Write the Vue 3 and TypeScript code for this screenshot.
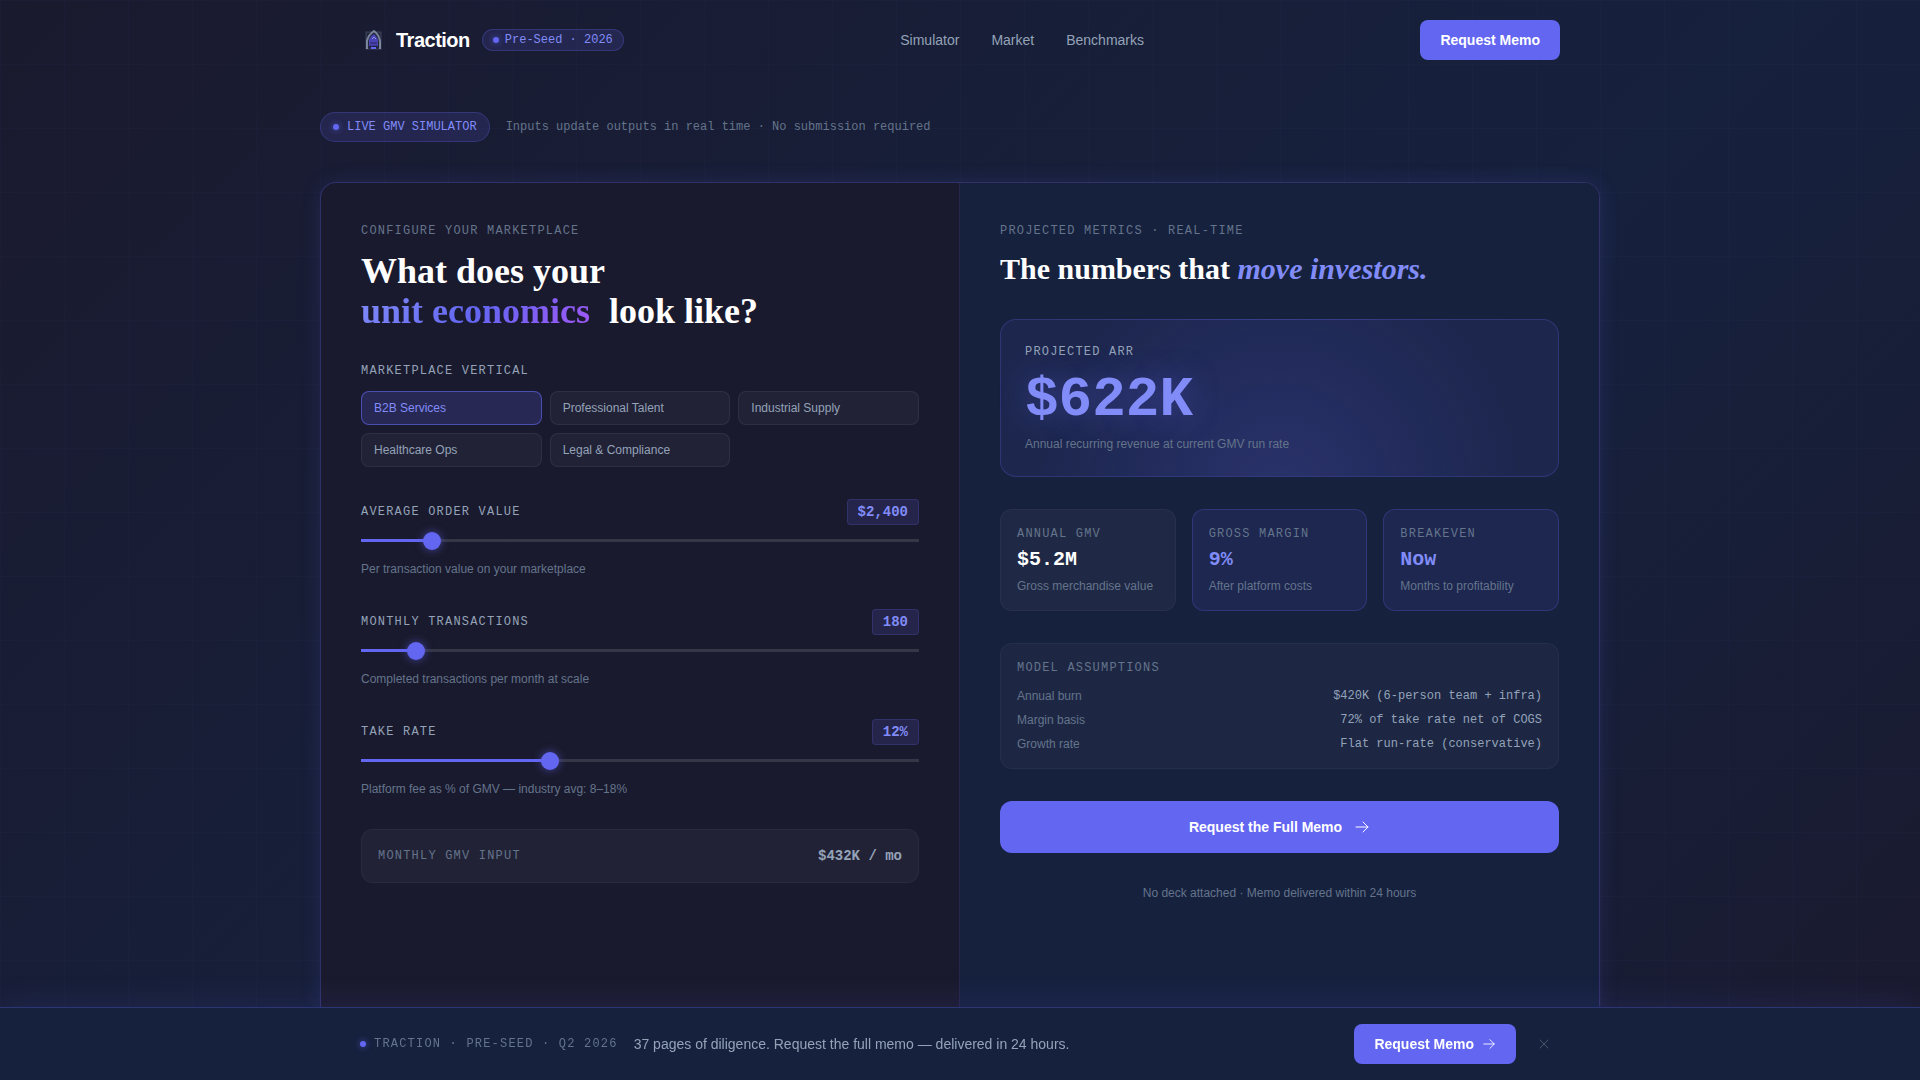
<script setup lang="ts">
import { computed, ref } from 'vue'

interface SliderField {
  id: string
  label: string
  hint: string
  min: number
  max: number
  step: number
  value: number
  format: (n: number) => string
}

const BURN = 420_000
const NET_OF_COGS = 0.72

const navLinks = ['Simulator', 'Market', 'Benchmarks']
const verticals = ['B2B Services', 'Professional Talent', 'Industrial Supply', 'Healthcare Ops', 'Legal & Compliance']
const activeVertical = ref('B2B Services')
const barOpen = ref(true)

const fields = ref<SliderField[]>([
  {
    id: 'aov',
    label: 'AVERAGE ORDER VALUE',
    hint: 'Per transaction value on your marketplace',
    min: 100,
    max: 20000,
    step: 100,
    value: 2400,
    format: (n) => '$' + n.toLocaleString('en-US'),
  },
  {
    id: 'transactions',
    label: 'MONTHLY TRANSACTIONS',
    hint: 'Completed transactions per month at scale',
    min: 10,
    max: 2000,
    step: 10,
    value: 180,
    format: (n) => n.toLocaleString('en-US'),
  },
  {
    id: 'take-rate',
    label: 'TAKE RATE',
    hint: 'Platform fee as % of GMV — industry avg: 8–18%',
    min: 3,
    max: 30,
    step: 1,
    value: 12,
    format: (n) => n + '%',
  },
])

const fillOf = (f: SliderField) => `${((f.value - f.min) / (f.max - f.min)) * 100}%`

function money(n: number): string {
  if (n >= 1_000_000) return `$${(n / 1_000_000).toFixed(1)}M`
  return `$${Math.round(n / 1000)}K`
}

const monthlyGmv = computed(() => fields.value[0].value * fields.value[1].value)
const annualGmv = computed(() => monthlyGmv.value * 12)
const takeRate = computed(() => fields.value[2].value / 100)
const arr = computed(() => annualGmv.value * takeRate.value)

const stats = computed(() => [
  { label: 'ANNUAL GMV', value: money(annualGmv.value), hint: 'Gross merchandise value', accent: false },
  { label: 'GROSS MARGIN', value: `${Math.round(takeRate.value * NET_OF_COGS * 100)}%`, hint: 'After platform costs', accent: true },
  { label: 'BREAKEVEN', value: arr.value * NET_OF_COGS >= BURN ? 'Now' : '24+', hint: 'Months to profitability', accent: true },
])

const assumptions = [
  { name: 'Annual burn', value: '$420K (6-person team + infra)' },
  { name: 'Margin basis', value: '72% of take rate net of COGS' },
  { name: 'Growth rate', value: 'Flat run-rate (conservative)' },
]
</script>

<template>
  <div class="page">
    <header class="header">
      <div class="header-inner">
        <div class="brand">
          <svg class="logo" viewBox="0 0 28 28" aria-hidden="true">
            <rect x="6" y="6" width="15" height="17" fill="#94a3b8" fill-opacity="0.08" stroke="#94a3b8" stroke-opacity="0.3" />
            <path d="M7 23V15C8 10 11 7 14 5C17 7 19 10 20 15V23" fill="none" stroke="#94a3b8" stroke-opacity="0.75" stroke-width="2" />
            <path d="M9 20V14C10 11 12 9 14 8C15 9 17 11 18 14V20Z" fill="#4a44b4" />
            <path d="M12 13L14 11L16 13" fill="none" stroke="#a5b4fc" stroke-opacity="0.7" />
            <path d="M10 17H17M9 23L11 19M18 23L16 19M14 23V19" fill="none" stroke="#25245a" />
            <path d="M11 22H16" stroke="#6366f1" stroke-width="2" />
          </svg>
          <span class="brand-name">Traction</span>
          <span class="pill pill-small"><i class="dot"></i>Pre-Seed · 2026</span>
        </div>
        <nav class="nav">
          <a v-for="link in navLinks" :key="link" :href="'#' + link.toLowerCase()">{{ link }}</a>
        </nav>
        <button type="button" class="btn">Request Memo</button>
      </div>
    </header>

    <main class="main">
      <div class="intro">
        <span class="pill pill-live"><i class="dot"></i>LIVE GMV SIMULATOR</span>
        <span class="intro-note">Inputs update outputs in real time · No submission required</span>
      </div>

      <div class="card">
        <section class="panel panel-inputs">
          <div class="heading-block">
            <p class="eyebrow">CONFIGURE YOUR MARKETPLACE</p>
            <h1>What does your<br /><span class="grad">unit economics</span> look like?</h1>
          </div>

          <div class="verticals-block" role="group" aria-labelledby="vertical-label">
            <p id="vertical-label" class="label">MARKETPLACE VERTICAL</p>
            <div class="verticals">
              <button
                v-for="v in verticals"
                :key="v"
                type="button"
                class="chip"
                :class="{ active: v === activeVertical }"
                :aria-pressed="v === activeVertical"
                @click="activeVertical = v"
              >{{ v }}</button>
            </div>
          </div>

          <div v-for="f in fields" :key="f.id" class="field">
            <div class="field-top">
              <label class="label" :for="f.id">{{ f.label }}</label>
              <output class="field-value" :for="f.id">{{ f.format(f.value) }}</output>
            </div>
            <input
              :id="f.id"
              v-model.number="f.value"
              type="range"
              :min="f.min"
              :max="f.max"
              :step="f.step"
              :style="{ '--fill': fillOf(f) }"
            />
            <p class="hint">{{ f.hint }}</p>
          </div>

          <div class="gmv">
            <span class="eyebrow">MONTHLY GMV INPUT</span>
            <span class="gmv-value">{{ money(monthlyGmv) }} / mo</span>
          </div>
        </section>

        <section class="panel panel-metrics">
          <div class="heading-block">
            <p class="eyebrow">PROJECTED METRICS · REAL-TIME</p>
            <h2>The numbers that <em>move investors.</em></h2>
          </div>

          <div class="arr">
            <p class="label">PROJECTED ARR</p>
            <p class="arr-value">{{ money(arr) }}</p>
            <p class="hint">Annual recurring revenue at current GMV run rate</p>
          </div>

          <div class="stats">
            <div v-for="s in stats" :key="s.label" class="stat" :class="{ accent: s.accent }">
              <p class="eyebrow">{{ s.label }}</p>
              <p class="stat-value">{{ s.value }}</p>
              <p class="hint">{{ s.hint }}</p>
            </div>
          </div>

          <div class="assumptions">
            <p class="eyebrow">MODEL ASSUMPTIONS</p>
            <dl>
              <div v-for="a in assumptions" :key="a.name" class="assumption">
                <dt>{{ a.name }}</dt>
                <dd>{{ a.value }}</dd>
              </div>
            </dl>
          </div>

          <button type="button" class="btn btn-large">
            Request the Full Memo
            <svg width="16" height="16" viewBox="0 0 16 16" aria-hidden="true"><path d="M2 8H14M9 3L14 8L9 13" /></svg>
          </button>
          <p class="hint note">No deck attached · Memo delivered within 24 hours</p>
        </section>
      </div>
    </main>

    <aside v-if="barOpen" class="bar">
      <div class="bar-inner">
        <span class="bar-tag"><i class="dot"></i>TRACTION · PRE-SEED · Q2 2026</span>
        <span class="bar-text">37 pages of diligence. Request the full memo — delivered in 24 hours.</span>
        <button type="button" class="btn">
          Request Memo
          <svg width="14" height="14" viewBox="0 0 16 16" aria-hidden="true"><path d="M2 8H14M9 3L14 8L9 13" /></svg>
        </button>
        <button type="button" class="close" aria-label="Dismiss" @click="barOpen = false">
          <svg width="10" height="10" viewBox="0 0 10 10" aria-hidden="true"><path d="M1 1L9 9M9 1L1 9" /></svg>
        </button>
      </div>
    </aside>
  </div>
</template>

<style>
body {
  margin: 0;
  background: #1a1a2e;
}
</style>

<style scoped>
.page {
  --accent: #6366f1;
  --accent-light: #818cf8;
  --muted: #64748b;
  --soft: #94a3b8;
  --mono: 'Liberation Mono', monospace;
  --sans: 'Liberation Sans', sans-serif;
  height: 100vh;
  overflow: hidden;
  font-family: var(--sans);
  font-size: 14px;
  line-height: 20px;
  color: #fff;
  background:
    linear-gradient(rgba(99, 102, 241, 0.03) 1px, transparent 1px) 0 0 / 64px 64px,
    linear-gradient(90deg, rgba(99, 102, 241, 0.03) 1px, transparent 1px) 0 0 / 64px 64px,
    linear-gradient(135deg, #1a1a2e 0%, #16213e 60%, #1a1a2e 100%);
}

p,
h1,
h2,
dl,
dd {
  margin: 0;
}

button {
  font-family: inherit;
  cursor: pointer;
}

.header-inner,
.bar-inner {
  box-sizing: border-box;
  max-width: 1280px;
  margin: 0 auto;
  padding: 0 40px;
  display: flex;
  align-items: center;
}

.header-inner {
  height: 80px;
  justify-content: space-between;
}

.brand {
  display: flex;
  align-items: center;
}

.logo {
  width: 28px;
  height: 28px;
  margin-right: 8px;
}

.brand-name {
  margin-right: 12px;
  font-size: 20px;
  line-height: 28px;
  font-weight: 700;
  letter-spacing: -0.5px;
}

.pill {
  display: inline-flex;
  align-items: center;
  border: 1px solid rgba(99, 102, 241, 0.25);
  border-radius: 999px;
  background: rgba(99, 102, 241, 0.15);
  color: var(--accent-light);
  font-family: var(--mono);
  font-size: 12px;
  line-height: 16px;
}

.pill-small {
  gap: 6px;
  padding: 2px 10px;
}

.pill-live {
  gap: 8px;
  padding: 6px 12px;
}

.dot {
  width: 6px;
  height: 6px;
  flex: none;
  border-radius: 50%;
  background: var(--accent);
  box-shadow: 0 0 6px rgba(99, 102, 241, 0.7);
}

.nav {
  display: flex;
  gap: 32px;
}

.nav a {
  color: var(--soft);
  text-decoration: none;
}

.btn {
  display: inline-flex;
  align-items: center;
  justify-content: center;
  gap: 8px;
  height: 40px;
  padding: 0 20px;
  border: 0;
  border-radius: 8px;
  background: var(--accent);
  color: #fff;
  font-size: 14px;
  line-height: 20px;
  font-weight: 700;
}

.btn svg,
.close svg {
  fill: none;
  stroke: currentColor;
  stroke-linecap: round;
  stroke-linejoin: round;
}

.btn-large {
  gap: 12px;
  width: 100%;
  height: 52px;
  border-radius: 12px;
}

.main {
  box-sizing: border-box;
  max-width: 1280px;
  margin: 0 auto;
  padding-top: 32px;
}

.intro {
  display: flex;
  align-items: center;
  gap: 16px;
  margin-bottom: 40px;
}

.intro-note {
  font-family: var(--mono);
  font-size: 12px;
  line-height: 16px;
  color: var(--muted);
}

.card {
  display: grid;
  grid-template-columns: 1fr 1fr;
  min-height: 836px;
  border: 1px solid rgba(99, 102, 241, 0.3);
  border-radius: 16px;
  overflow: hidden;
  background: #1a1a2e;
  box-shadow: 0 0 20px rgba(99, 102, 241, 0.15);
}

.panel {
  display: flex;
  flex-direction: column;
  gap: 32px;
  padding: 40px;
}

.panel-inputs {
  border-right: 1px solid rgba(99, 102, 241, 0.15);
}

.panel-metrics {
  background: #16213e;
}

.eyebrow,
.label {
  font-family: var(--mono);
  font-size: 12px;
  line-height: 16px;
  letter-spacing: 0.1em;
  color: var(--muted);
}

.label {
  color: var(--soft);
}

.heading-block .eyebrow,
.verticals-block .label {
  margin-bottom: 12px;
}

h1,
h2 {
  font-family: 'Liberation Serif', serif;
  font-weight: 700;
}

h1 {
  font-size: 36px;
  line-height: 40px;
}

h2 {
  font-size: 30px;
  line-height: 36px;
}

h2 em {
  color: var(--accent-light);
}

.grad {
  padding-right: 10px;
  background: linear-gradient(135deg, #818cf8 0%, #6366f1 50%, #a855f7 100%);
  background-clip: text;
  -webkit-background-clip: text;
  color: transparent;
}

.verticals {
  display: grid;
  grid-template-columns: repeat(3, 1fr);
  gap: 8px;
}

.chip {
  height: 34px;
  padding: 0 12px;
  border: 1px solid rgba(255, 255, 255, 0.06);
  border-radius: 8px;
  background: rgba(255, 255, 255, 0.04);
  color: var(--soft);
  font-size: 12px;
  line-height: 16px;
  text-align: left;
}

.chip.active {
  border-color: rgba(99, 102, 241, 0.6);
  background: rgba(99, 102, 241, 0.2);
  color: var(--accent-light);
}

.field-top {
  display: flex;
  align-items: center;
  justify-content: space-between;
}

.field-value {
  padding: 2px 10px;
  border: 1px solid rgba(99, 102, 241, 0.2);
  border-radius: 4px;
  background: rgba(99, 102, 241, 0.15);
  color: var(--accent-light);
  font-family: var(--mono);
  font-size: 14px;
  line-height: 20px;
  font-weight: 700;
}

input[type='range'] {
  -webkit-appearance: none;
  appearance: none;
  display: block;
  width: 100%;
  height: 20px;
  margin: 6px 0 10px;
  background: linear-gradient(to right, var(--accent) var(--fill), rgba(255, 255, 255, 0.12) var(--fill)) 0 8px / 100% 3px no-repeat;
  cursor: pointer;
}

input[type='range']::-webkit-slider-thumb {
  -webkit-appearance: none;
  width: 18px;
  height: 18px;
  border-radius: 50%;
  background: var(--accent);
  box-shadow: 0 0 8px rgba(99, 102, 241, 0.6);
}

.hint {
  font-size: 12px;
  line-height: 16px;
  color: var(--muted);
}

.gmv {
  display: flex;
  align-items: center;
  justify-content: space-between;
  padding: 16px;
  border: 1px solid rgba(255, 255, 255, 0.04);
  border-radius: 12px;
  background: rgba(255, 255, 255, 0.04);
}

.gmv-value {
  color: var(--soft);
  font-family: var(--mono);
  font-weight: 700;
}

.arr {
  padding: 24px;
  border: 1px solid rgba(99, 102, 241, 0.25);
  border-radius: 16px;
  background:
    radial-gradient(circle 240px at 50% 110%, rgba(99, 102, 241, 0.18), transparent),
    rgba(99, 102, 241, 0.09);
}

.arr-value {
  margin: 12px 0 8px;
  color: var(--accent-light);
  font-family: var(--mono);
  font-size: 56px;
  line-height: 56px;
  font-weight: 700;
  text-shadow: 0 0 30px rgba(99, 102, 241, 0.4);
}

.stats {
  display: grid;
  grid-template-columns: repeat(3, 1fr);
  gap: 16px;
}

.stat,
.assumptions {
  padding: 16px;
  border: 1px solid rgba(255, 255, 255, 0.04);
  border-radius: 12px;
  background: rgba(255, 255, 255, 0.04);
}

.assumptions {
  background: rgba(255, 255, 255, 0.03);
}

.stat.accent {
  border-color: rgba(99, 102, 241, 0.25);
  background: rgba(99, 102, 241, 0.1);
}

.stat-value {
  margin: 4px 0;
  font-family: var(--mono);
  font-size: 20px;
  line-height: 28px;
  font-weight: 700;
}

.accent .stat-value {
  color: var(--accent-light);
}

.assumptions dl {
  display: flex;
  flex-direction: column;
  gap: 8px;
  margin-top: 12px;
}

.assumption {
  display: flex;
  align-items: center;
  justify-content: space-between;
  font-size: 12px;
  line-height: 16px;
  color: var(--muted);
}

.assumption dd {
  color: var(--soft);
  font-family: var(--mono);
}

.note {
  text-align: center;
}

.bar {
  position: fixed;
  left: 0;
  right: 0;
  bottom: 0;
  border-top: 1px solid rgba(99, 102, 241, 0.3);
  background: #16213e;
  box-shadow: 0 -4px 32px rgba(99, 102, 241, 0.12);
}

.bar-inner {
  height: 72px;
}

.bar-tag {
  display: inline-flex;
  align-items: center;
  gap: 8px;
  margin-right: 16px;
  color: var(--muted);
  font-family: var(--mono);
  font-size: 12px;
  line-height: 16px;
  letter-spacing: 0.1em;
}

.bar-text {
  flex: 1;
  color: var(--soft);
}

.close {
  display: flex;
  align-items: center;
  justify-content: center;
  width: 32px;
  height: 32px;
  margin-left: 12px;
  padding: 0;
  border: 0;
  background: none;
  color: #475569;
}
</style>
